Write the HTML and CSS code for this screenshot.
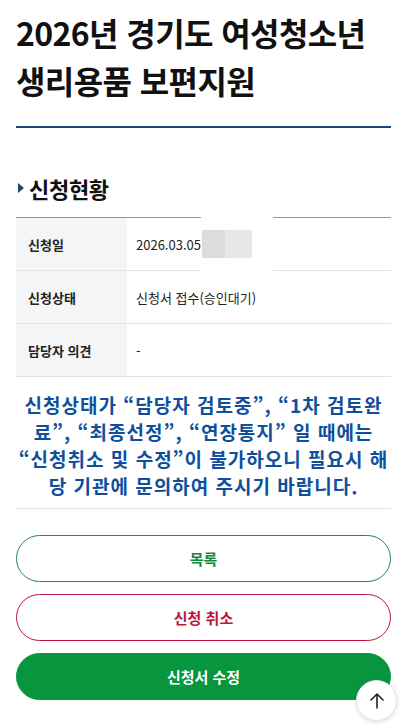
FILE: index.html
```html
<!DOCTYPE html>
<html lang="ko">
<head>
<meta charset="utf-8">
<link rel="stylesheet" href="styles.css">
</head>
<body>
<div class="page">
  <h1 class="title">2026년 경기도 여성청소년<br>생리용품 보편지원</h1>
  <div class="divider"></div>
  <h2 class="section"><span class="tri"></span>신청현황</h2>
  <div class="table">
    <div class="row">
      <div class="th">신청일</div>
      <div class="td">2026.03.05<span class="blur"><span class="b1"></span><span class="b2"></span></span></div>
    </div>
    <div class="row">
      <div class="th">신청상태</div>
      <div class="td">신청서 접수(승인대기)</div>
    </div>
    <div class="row">
      <div class="th">담당자 의견</div>
      <div class="td">-</div>
    </div>
  </div>
  <p class="notice">신청상태가 “담당자 검토중”, “1차 검토완<br>료”, “최종선정”, “연장통지” 일 때에는<br>“신청취소 및 수정”이 불가하오니 필요시 해<br>당 기관에 문의하여 주시기 바랍니다.</p>
  <div class="buttons">
    <button class="btn btn-list">목록</button>
    <button class="btn btn-cancel">신청 취소</button>
    <button class="btn btn-edit">신청서 수정</button>
  </div>
</div>
<button class="totop" aria-label="맨 위로">
  <svg width="20" height="20" viewBox="0 0 20 20"><path d="M10 17V3M4 9l6-6 6 6" fill="none" stroke="#222" stroke-width="1.6" stroke-linecap="round" stroke-linejoin="round"/></svg>
</button>
</body>
</html>
```
FILE: styles.css
```css
* { box-sizing: border-box; }
html, body { margin: 0; padding: 0; background: #fff; }
body {
  font-family: "Noto Sans CJK KR", "Noto Sans", sans-serif;
  color: #111;
}
.page { padding: 0 9px 0 16px; }
.title {
  margin: 0;
  padding-top: 8px;
  font-size: 32px;
  line-height: 48px;
  font-weight: 700;
  letter-spacing: -0.6px;
  color: #111;
}
.divider {
  margin-top: 22px;
  height: 2px;
  background: #1a4670;
}
.section {
  margin: 46px 0 0;
  display: flex;
  align-items: center;
  font-size: 22px;
  line-height: 28px;
  font-weight: 700;
  letter-spacing: -0.3px;
  color: #111;
}
.tri {
  width: 0; height: 0;
  margin: 0 5px 0 2px;
  border-top: 5px solid transparent;
  border-bottom: 5px solid transparent;
  border-left: 6px solid #1a4670;
}
.table {
  margin-top: 15px;
  border-top: 1px solid #7f9bb0;
}
.row {
  display: grid;
  grid-template-columns: 111px 1fr;
  height: 53px;
  border-bottom: 1px solid #e2e5e8;
}
.th {
  background: #f3f5f7;
  display: flex;
  align-items: center;
  padding-left: 12px;
  font-size: 13px;
  font-weight: 700;
  color: #222;
}
.td {
  display: flex;
  align-items: center;
  padding-left: 9px;
  font-size: 13px;
  color: #222;
  position: relative;
}
.blur {
  position: absolute;
  left: 74px;
  top: -17px;
  width: 72px;
  height: 70px;
  background: #fff;
  display: flex;
  align-items: center;
  padding-left: 1px;
}
.b1 { width: 23px; height: 28px; background: #dcdcdc; margin-top: 16px; }
.b2 { width: 27px; height: 28px; background: #e7e7e7; margin-top: 16px; }
.notice {
  margin: 0;
  padding: 14px 0 9px;
  border-bottom: 1px solid #e2e5e8;
  text-align: center;
  font-size: 19px;
  line-height: 27px;
  font-weight: 700;
  letter-spacing: 1px;
  white-space: nowrap;
  color: #104f9c;
}
.buttons {
  margin-top: 26px;
  display: flex;
  flex-direction: column;
  gap: 12px;
}
.btn {
  height: 47px;
  border-radius: 24px;
  font-family: "Noto Sans CJK KR", "Noto Sans", sans-serif;
  font-size: 15px;
  font-weight: 700;
  background: #fff;
  cursor: pointer;
}
.btn-list { border: 1px solid #1f8a4c; color: #13873f; }
.btn-cancel { border: 1px solid #b8173f; color: #c0133c; }
.btn-edit { border: 1px solid #07963d; background: #07963d; color: #fff; }
.totop {
  position: fixed;
  left: 356px;
  top: 680px;
  width: 41px;
  height: 41px;
  border-radius: 50%;
  border: 1px solid #e6e6e6;
  background: #fff;
  box-shadow: 0 1px 4px rgba(0,0,0,0.15);
  display: flex;
  align-items: center;
  justify-content: center;
  padding: 0;
}
```
